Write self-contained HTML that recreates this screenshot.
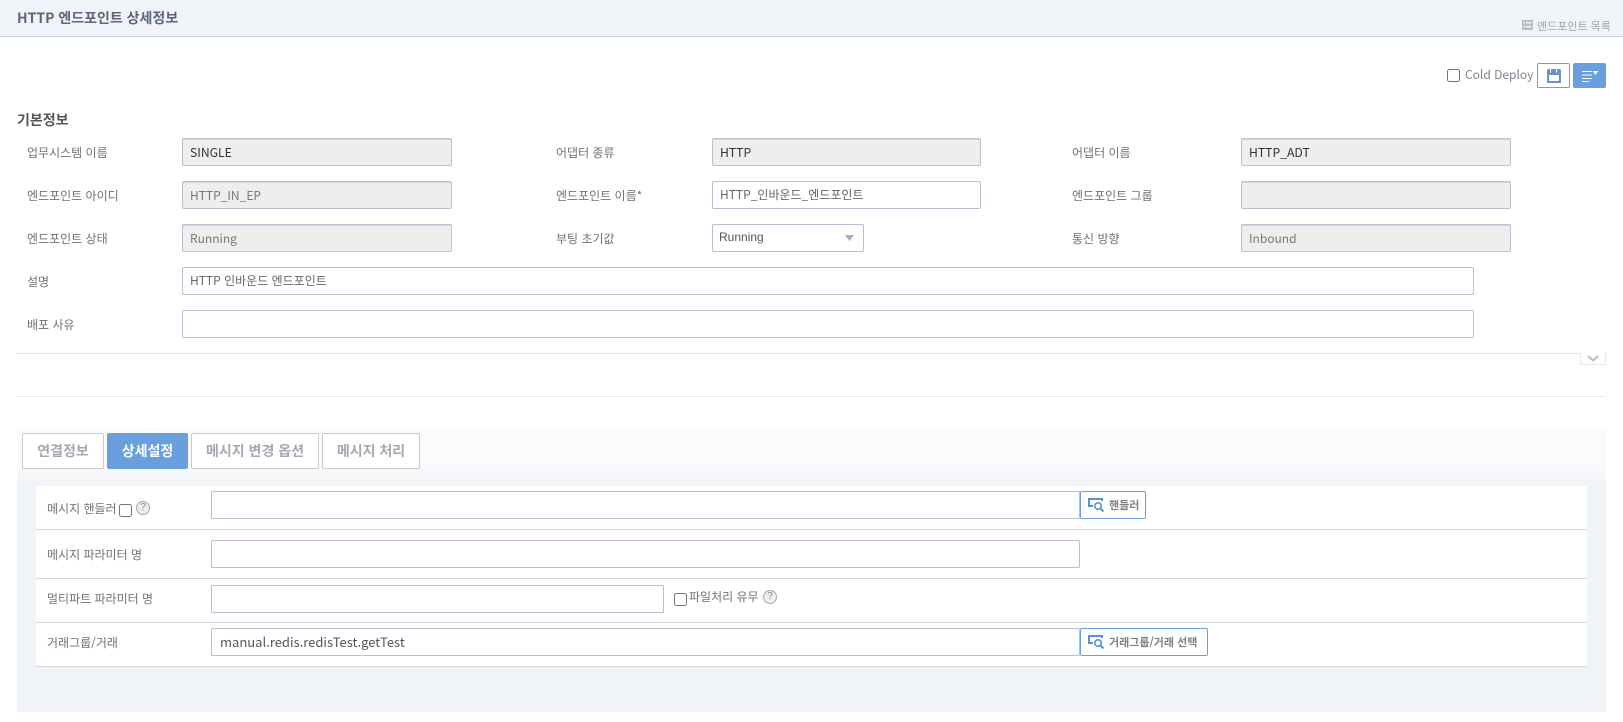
<!DOCTYPE html>
<html lang="ko"><head><meta charset="utf-8"><title>HTTP 엔드포인트 상세정보</title>
<style>
html,body{margin:0;padding:0;background:#fff}
body{width:1623px;height:722px;overflow:hidden;position:relative;font-family:"Noto Sans CJK KR","Liberation Sans",sans-serif;font-size:12px;color:#666}
.a{position:absolute;white-space:nowrap}
.l{position:absolute;white-space:nowrap;line-height:18px;font-size:12px;color:#727272}
.i{position:absolute;box-sizing:border-box;height:28px;border:1px solid #b6c0d2;border-radius:2px;background:#fff;font-size:12px;line-height:26px;padding-left:7px;color:#666;white-space:nowrap}
.g{background:#eee;border-color:#b9c2d0;box-shadow:inset 0 1px 0 #d4d8de;line-height:28px}
.d{color:#333;font-size:12.2px;line-height:26px}
.t{position:absolute;top:433px;height:36px;box-sizing:border-box;border:1px solid #c9c9c9;border-radius:2px;background:#fff;color:#a3a9b3;font-weight:700;font-size:14px;line-height:35px;text-align:center;white-space:nowrap}
.cb{position:absolute;width:13px;height:13px;box-sizing:border-box;border:1px solid #767676;border-radius:2.5px;background:#fff}
.q{position:absolute;width:14px;height:14px;box-sizing:border-box;border:1px solid #aaa;border-radius:50%;background:#eee;color:#888;font:10px/12px "Liberation Sans",sans-serif;text-align:center}
.hr{position:absolute;left:36px;width:1551px;height:1px;background:#d3d7dc}
.b{position:absolute;box-sizing:border-box;height:28px;border:1px solid #6a9fde;border-radius:2px;background:#fff;color:#808080;font-weight:700;font-size:11px;line-height:27px;white-space:nowrap}
.b svg{position:absolute;left:7px;top:6px}
.b span{position:absolute;left:28px;top:0}
</style></head><body>
<div class="a" style="left:0;top:0;width:1623px;height:36px;background:#f0f3f8;border-bottom:1px solid #c6d1e0"></div>
<div class="a" style="left:17px;top:7px;font-size:14px;line-height:22px;font-weight:700;color:#59677a">HTTP 엔드포인트 상세정보</div>
<svg class="a" style="left:1522px;top:20px" width="11" height="10" viewBox="0 0 11 10"><path d="M0 0h11v10H0z" fill="#bdbdbd"/><path d="M1.500 2h1.500v1.500H1.500zM4 2h5.500v1.500H4zM1.500 6h1.500v1.500H1.500zM4 6h5.500v1.500H4z" fill="#f0f3f8"/></svg>
<div class="a" style="left:1537px;top:17px;font-size:11px;line-height:18px;color:#a5a5a5">엔드포인트 목록</div>

<div class="cb" style="left:1447px;top:69px"></div>
<div class="a" style="left:1465px;top:66px;font-size:12px;line-height:18px;color:#7b8490">Cold Deploy</div>
<div class="a" style="left:1537px;top:63px;width:33px;height:25px;box-sizing:border-box;border:1px solid #6a9fde;border-radius:2px;background:#fff"></div>
<svg class="a" style="left:1547px;top:69px" width="14" height="14" viewBox="0 0 14 14"><path d="M0 1.500Q0 0 1.500 0H3v3.500h1V0h5v3.500h1V0h2.500Q14 0 14 1.500V14H0z" fill="#6a94c8"/><rect x="2" y="6" width="10" height="6" fill="#fff"/></svg>
<div class="a" style="left:1573px;top:63px;width:33px;height:25px;border-radius:2px;background:#6a9fde"></div>
<svg class="a" style="left:1582px;top:70px" width="17" height="13" viewBox="0 0 17 13"><path d="M0 1h10v1H0zM0 4.500h10v1H0zM0 8h10v1H0zM0 11h7v1H0z" fill="#fff"/><path d="M10.500 1h6l-3 4z" fill="#fff"/></svg>

<div class="a" style="left:17px;top:110px;font-size:14px;line-height:20px;font-weight:700;color:#555">기본정보</div>

<div class="l" style="left:27px;top:144px">업무시스템 이름</div>
<div class="i g d" style="left:182px;top:138px;width:270px">SINGLE</div>
<div class="l" style="left:556px;top:144px">어댑터 종류</div>
<div class="i g d" style="left:712px;top:138px;width:269px">HTTP</div>
<div class="l" style="left:1072px;top:144px">어댑터 이름</div>
<div class="i g d" style="left:1241px;top:138px;width:270px">HTTP_ADT</div>

<div class="l" style="left:27px;top:187px">엔드포인트 아이디</div>
<div class="i g" style="left:182px;top:181px;width:270px;color:#777">HTTP_IN_EP</div>
<div class="l" style="left:556px;top:187px">엔드포인트 이름*</div>
<div class="i" style="left:712px;top:181px;width:269px">HTTP_인바운드_엔드포인트</div>
<div class="l" style="left:1072px;top:187px">엔드포인트 그룹</div>
<div class="i g" style="left:1241px;top:181px;width:270px"></div>

<div class="l" style="left:27px;top:230px">엔드포인트 상태</div>
<div class="i g" style="left:182px;top:224px;width:270px;color:#777">Running</div>
<div class="l" style="left:556px;top:230px">부팅 초기값</div>
<div class="i" style="left:712px;top:224px;width:152px;padding-left:6px;font:12px/24px 'Liberation Sans',sans-serif;color:#555">Running</div>
<svg class="a" style="left:845px;top:235px" width="10" height="6"><path d="M0 0h9l-4.500 6z" fill="#a9aebb"/></svg>
<div class="l" style="left:1072px;top:230px">통신 방향</div>
<div class="i g" style="left:1241px;top:224px;width:270px;color:#777">Inbound</div>

<div class="l" style="left:27px;top:273px">설명</div>
<div class="i" style="left:182px;top:267px;width:1292px">HTTP 인바운드 엔드포인트</div>
<div class="l" style="left:27px;top:316px">배포 사유</div>
<div class="i" style="left:182px;top:310px;width:1292px"></div>

<div class="a" style="left:17px;top:353px;width:1589px;height:1px;background:#e3e3e3"></div>
<div class="a" style="left:1580px;top:353px;width:26px;height:12px;box-sizing:border-box;border:1px solid #e6e6e6;border-top:0;background:#fff"></div>
<svg class="a" style="left:1587px;top:355px" width="12" height="8"><path d="M1 1l5 4.500 5-4.500" fill="none" stroke="#bdbdbd" stroke-width="2"/></svg>
<div class="a" style="left:17px;top:396px;width:1589px;height:1px;background:#ececec"></div>

<div class="a" style="left:17px;top:427px;width:1589px;height:285px;background:linear-gradient(#fafbfd 0,#fafbfd 35px,#f0f3f7 60px,#f0f3f7 100%)"></div>
<div class="t" style="left:22px;width:82px">연결정보</div>
<div class="t" style="left:107px;width:81px;background:#6a9fde;border-color:#6a9fde;color:#fff">상세설정</div>
<div class="t" style="left:191px;width:128px">메시지 변경 옵션</div>
<div class="t" style="left:322px;width:98px">메시지 처리</div>

<div class="a" style="left:36px;top:486px;width:1551px;height:180px;background:#fff"></div>
<div class="hr" style="top:529px"></div>
<div class="hr" style="top:578px"></div>
<div class="hr" style="top:622px"></div>
<div class="hr" style="top:666px"></div>

<div class="l" style="left:47px;top:500px">메시지 핸들러</div>
<div class="cb" style="left:119px;top:504px"></div>
<div class="q" style="left:136px;top:501px">?</div>
<div class="i" style="left:211px;top:491px;width:869px"></div>
<div class="b" style="left:1080px;top:491px;width:66px"><svg width="18" height="15" viewBox="0 0 18 15"><path d="M0 0h15v3h-2V2H2v5h3v2H0z" fill="#5d92d2"/><circle cx="10" cy="8" r="3.200" fill="none" stroke="#5d92d2" stroke-width="1.600"/><path d="M12.500 10.500l3 3" stroke="#5d92d2" stroke-width="2"/></svg><span>핸들러</span></div>

<div class="l" style="left:47px;top:546px">메시지 파라미터 명</div>
<div class="i" style="left:211px;top:540px;width:869px"></div>

<div class="l" style="left:47px;top:590px">멀티파트 파라미터 명</div>
<div class="i" style="left:211px;top:585px;width:453px"></div>
<div class="cb" style="left:674px;top:593px"></div>
<div class="l" style="left:689px;top:588px">파일처리 유무</div>
<div class="q" style="left:763px;top:590px">?</div>

<div class="l" style="left:47px;top:634px">거래그룹/거래</div>
<div class="i" style="left:211px;top:628px;width:869px;font-size:13px;color:#555;padding-left:8px">manual.redis.redisTest.getTest</div>
<div class="b" style="left:1080px;top:628px;width:128px"><svg width="18" height="15" viewBox="0 0 18 15"><path d="M0 0h15v3h-2V2H2v5h3v2H0z" fill="#5d92d2"/><circle cx="10" cy="8" r="3.200" fill="none" stroke="#5d92d2" stroke-width="1.600"/><path d="M12.500 10.500l3 3" stroke="#5d92d2" stroke-width="2"/></svg><span>거래그룹/거래 선택</span></div>
</body></html>
